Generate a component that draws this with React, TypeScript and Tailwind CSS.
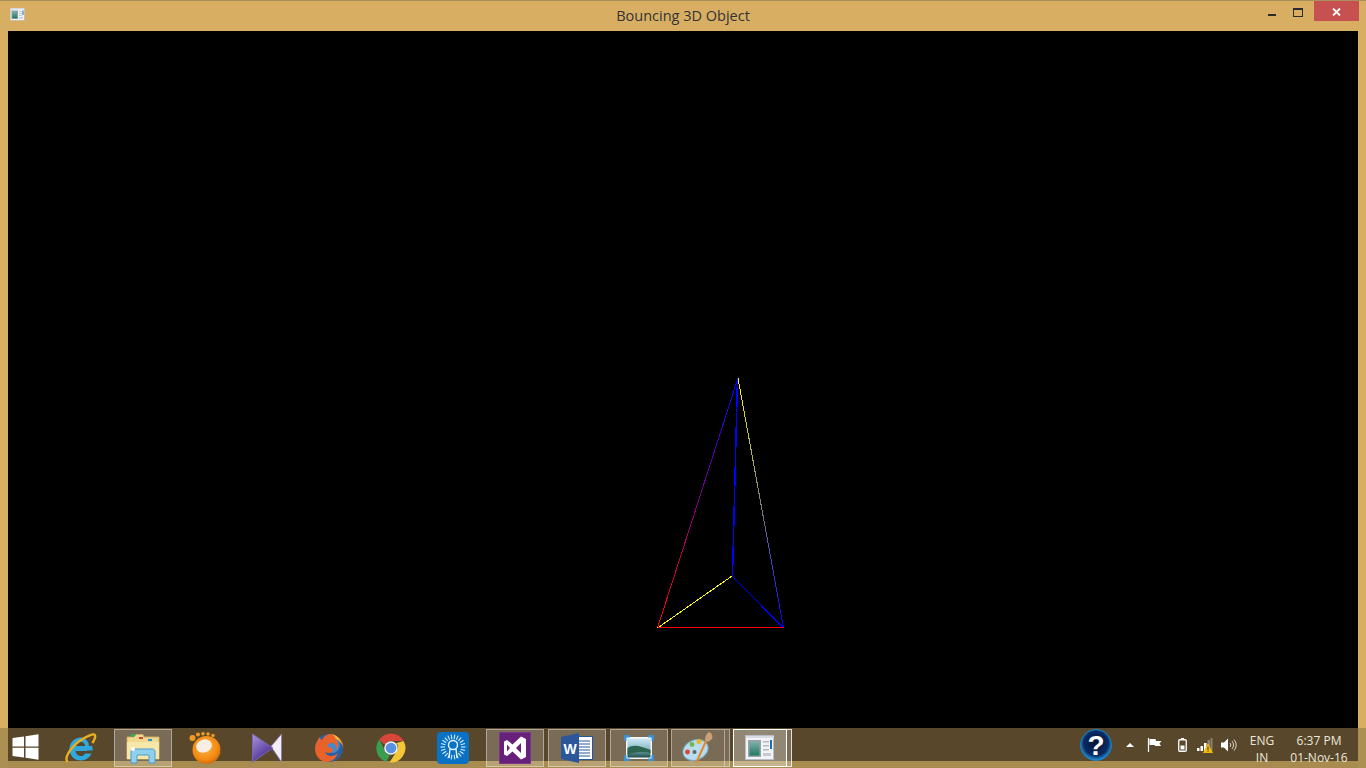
function WindowIcon({ className }: { className: string }) {
  return (
    <svg viewBox="0 0 30 26" className={className}>
      <rect x="0.5" y="0.5" width="28" height="24" fill="#f1f3f6" stroke="#b9bec6" />
      <rect x="1" y="1" width="28" height="2" fill="#d9dde3" />
      <rect x="3" y="5" width="13" height="17" fill="#9aa1a8" />
      <defs>
        <linearGradient id="thumb" x1="0" y1="0" x2="0" y2="1">
          <stop offset="0" stopColor="#7fb0ac" />
          <stop offset="1" stopColor="#1f7a63" />
        </linearGradient>
      </defs>
      <rect x="4.5" y="6.5" width="10" height="14" fill="url(#thumb)" />
      <rect x="18" y="6" width="6" height="1.5" fill="#b5bac0" />
      <rect x="18" y="10" width="6" height="1.5" fill="#b5bac0" />
      <rect x="18" y="14" width="6" height="1.5" fill="#b5bac0" />
      <rect x="18" y="18" width="8" height="3" fill="#c7cbd0" />
      <rect x="25" y="5" width="2" height="9" fill="#1c6fb5" />
    </svg>
  );
}

function StartIcon() {
  return (
    <svg viewBox="0 0 26 26" className="w-[27px] h-[26px]">
      <path d="M0 4 L11.5 2.4 V12.4 H0 Z M13 2.2 L26 0.2 V12.4 H13 Z M0 13.8 H11.5 V23.6 L0 22 Z M13 13.8 H26 V25.8 L13 23.8 Z" fill="#fff" />
    </svg>
  );
}

function IeIcon() {
  return (
    <svg viewBox="0 0 32 32" className="w-8 h-8">
      <path d="M7.500 15 H24 C24.500 9.500 20 5 15 5.500 C9 6 4.500 11 4.500 17 C4.500 24 10 29 16.500 28.500 C21 28 24.500 26 26.500 21.500 H20 C19 23.500 17.500 24 16 24 C13 24 10.500 21.500 10.500 18.500 H27.500 C28 16.500 27.500 15 27 14 H10.500 C11 11.500 13 10 15.500 10 C18 10 19.500 11.500 20 14" fill="#2fa8e0" />
      <path d="M10.500 14 C11 11.500 13 10 15.500 10 C18 10 19.500 11.500 20 14 Z" fill="#58472b" />
      <path d="M10.500 18.500 H22" stroke="#2fa8e0" strokeWidth="1" />
      <path d="M2.500 30 C-1.500 25 9 9 26 2.800 C31 1 31.500 4.500 27.500 11" fill="none" stroke="#e8b021" strokeWidth="2.400" />
    </svg>
  );
}

function FolderIcon() {
  return (
    <svg viewBox="0 0 34 32" className="w-[34px] h-8">
      <path d="M1 5 H8 L10 2.500 H17 L18 5 H33 V27 H1 Z" fill="#f0d98e" stroke="#c9ad67" />
      <rect x="5" y="2" width="4" height="2.500" fill="#2fb24a" />
      <rect x="13" y="5" width="4" height="2" fill="#c9433a" />
      <rect x="22" y="7" width="4" height="2" fill="#2b8fd0" />
      <path d="M1 10 H33 V27 H1 Z" fill="#f6e6a8" />
      <path d="M5 31 V20 C5 18 6 17 8 17 H26 C28 17 29 18 29 20 V31 H23 V23 H11 V31 Z" fill="#8fd0ec" stroke="#4f9ccc" />
      <circle cx="7" cy="17" r="2" fill="#fff" />
    </svg>
  );
}

function GomIcon() {
  return (
    <svg viewBox="0 0 32 32" className="w-8 h-8">
      <defs>
        <radialGradient id="gom" cx="0.450" cy="0.400" r="0.650">
          <stop offset="0" stopColor="#ffb347" />
          <stop offset="0.700" stopColor="#f28a12" />
          <stop offset="1" stopColor="#c9600a" />
        </radialGradient>
      </defs>
      <circle cx="3.500" cy="6" r="3" fill="#f39a1e" />
      <circle cx="9" cy="2.500" r="2" fill="#f39a1e" />
      <circle cx="14" cy="1.800" r="1.800" fill="#f39a1e" />
      <circle cx="19" cy="2" r="1.800" fill="#f39a1e" />
      <circle cx="24" cy="3.500" r="1.700" fill="#f39a1e" />
      <circle cx="17.500" cy="18" r="14" fill="url(#gom)" />
      <ellipse cx="15" cy="14" rx="8" ry="6.500" fill="#f7efe4" transform="rotate(-20 15 14)" />
    </svg>
  );
}

function KmIcon() {
  return (
    <svg viewBox="0 0 32 32" className="w-8 h-[31px]">
      <defs>
        <linearGradient id="km" x1="0" y1="0" x2="0.600" y2="1">
          <stop offset="0" stopColor="#a897dc" />
          <stop offset="1" stopColor="#46288f" />
        </linearGradient>
      </defs>
      <path d="M31 1 L20 14 L21.500 16 L31 30 Z" fill="#f2eff8" stroke="#8b7bb5" />
      <path d="M1 1 L22 15.500 L1 30 Z" fill="url(#km)" stroke="#7a68b0" />
    </svg>
  );
}

function FirefoxIcon() {
  return (
    <svg viewBox="0 0 32 32" className="w-8 h-8">
      <circle cx="16" cy="16" r="14" fill="#2c5ea3" />
      <circle cx="19" cy="13" r="8" fill="#4688c9" />
      <path d="M16 2 C24 2 30 8 30.500 15 C29 10 26 7 23 7 C26 11 26 15 23 17 C24 14 22 11 19 11 C15 11 14 14 15 15 C17 15 20 16 20 18 C20 21 15 22 12 20 C14 25 21 25 25 21 C23 27 18 30 14 30 C7 30 1.500 23 2 16 C2.500 11 5 7 7 5 C7 7 8 8 9 8 C10 5 13 3 16 2 Z" fill="#e8622a" />
      <path d="M23 7 C27 9 30 13 30.500 17 C30 11 26 4 19 2 C21 3.500 22 5 23 7 Z" fill="#f7b733" />
    </svg>
  );
}

function ChromeIcon() {
  return (
    <svg viewBox="0 0 30 30" className="w-[30px] h-[30px]">
      <path d="M15 0.500 A14.500 14.500 0 0 1 27.600 8 H15 A7 7 0 0 0 8.500 12 L3.300 6.500 A14.500 14.500 0 0 1 15 0.500 Z" fill="#d8453a" />
      <path d="M3.300 6.500 L8.800 17.500 A7 7 0 0 0 14 22 L10 29 A14.500 14.500 0 0 1 3.300 6.500 Z" fill="#3a9d50" />
      <path d="M27.600 8 A14.500 14.500 0 0 1 13.500 29.400 L20.500 18.500 A7 7 0 0 0 20.500 10 Z" fill="#f3c736" />
      <circle cx="15" cy="15" r="6.800" fill="#f3f3f3" />
      <circle cx="15" cy="15" r="5.300" fill="#5a90e0" />
    </svg>
  );
}

// rays round the keyhole, computed once
const rays = Array.from({ length: 22 }, (_, i) => {
  const a = (i / 22) * Math.PI * 2;
  return {
    x1: 16 + Math.cos(a) * 8,
    y1: 15 + Math.sin(a) * 8,
    x2: 16 + Math.cos(a) * 12.5,
    y2: 15 + Math.sin(a) * 12.5,
  };
});

function RaysIcon() {
  return (
    <svg viewBox="0 0 32 32" className="w-8 h-8">
      <rect width="32" height="32" rx="4" fill="#0a72c4" />
      {rays.map((r, i) => (
        <line key={i} {...r} stroke="#d6ecfa" strokeWidth="1.100" />
      ))}
      <circle cx="16" cy="13" r="4.500" fill="#0a72c4" stroke="#eaf5fc" strokeWidth="1.400" />
      <path d="M13 17 L12 26 M19 17 L20 26" stroke="#eaf5fc" strokeWidth="1.400" />
    </svg>
  );
}

function VsIcon() {
  return (
    <svg viewBox="0 0 32 32" className="w-8 h-8">
      <rect width="32" height="32" fill="#68217a" stroke="#8a4a9a" />
      <path d="M22 4.500 L27 7 V25 L22 27.500 L13.500 19.500 L8 24 L5 22.500 V9.500 L8 8 L13.500 12.500 Z M22 11 L17 16 L22 21 Z M8 12.500 V19.500 L11 16 Z" fill="#fff" fillRule="evenodd" />
    </svg>
  );
}

function WordIcon() {
  return (
    <svg viewBox="0 0 32 30" className="w-8 h-[30px]">
      <rect x="14" y="3.500" width="17.500" height="23" fill="#fff" stroke="#2b579a" />
      <path d="M17 8 H29 M17 11 H29 M17 14 H29 M17 17 H29 M17 20 H29 M17 23 H29" stroke="#2b579a" />
      <path d="M0 4 L18 0 V30 L0 26 Z" fill="#2b579a" />
      <text x="9" y="20.500" textAnchor="middle" fontSize="14" fontWeight="700" fill="#fff" fontFamily="'Liberation Sans', sans-serif">W</text>
    </svg>
  );
}

function PhotosIcon() {
  return (
    <svg viewBox="0 0 30 26" className="w-[30px] h-[26px]">
      <defs>
        <linearGradient id="sky" x1="0" y1="0" x2="0" y2="1">
          <stop offset="0" stopColor="#cfe8f4" />
          <stop offset="0.500" stopColor="#8fc0cc" />
          <stop offset="1" stopColor="#1d4d4a" />
        </linearGradient>
      </defs>
      <rect x="2" y="2" width="26" height="22" fill="#f4f6f8" />
      <rect x="3.500" y="3.500" width="23" height="19" fill="url(#sky)" />
      <path d="M3.500 13 C10 9 16 11 26.500 15 V18 C18 16 10 17 3.500 20 Z" fill="#2d6650" />
      <path d="M0 0 H6 V2.500 H2.500 V6 H0 Z M24 0 H30 V6 H27.500 V2.500 H24 Z M0 20 H2.500 V23.500 H6 V26 H0 Z M27.500 20 H30 V26 H24 V23.500 H27.500 Z" fill="#3d8fd0" />
    </svg>
  );
}

function PaintIcon() {
  return (
    <svg viewBox="0 0 32 32" className="w-8 h-8">
      <ellipse cx="13.500" cy="18" rx="13" ry="10" fill="#b9ddec" stroke="#6fa9c4" transform="rotate(-22 13.500 18)" />
      <circle cx="5.500" cy="20" r="2.400" fill="#d8453a" />
      <circle cx="10" cy="12.500" r="2.400" fill="#74b84a" />
      <circle cx="17" cy="9.500" r="2.500" fill="#f0b429" />
      <circle cx="12.500" cy="20" r="2" fill="#5c6670" />
      <path d="M14.500 30 L24.500 8" stroke="#e8862a" strokeWidth="2" />
      <path d="M23 8 C23 4 25 1 27 0 C30 1 31 4 30 7 L26 10 Z" fill="#c9a077" />
    </svg>
  );
}

function HelpIcon() {
  return (
    <svg viewBox="0 0 32 32" className="w-8 h-8">
      <defs>
        <radialGradient id="help" cx="0.500" cy="0.450" r="0.520">
          <stop offset="0" stopColor="#05122f" />
          <stop offset="0.750" stopColor="#0a2a63" />
          <stop offset="1" stopColor="#1f86c9" />
        </radialGradient>
      </defs>
      <circle cx="16" cy="16" r="15.500" fill="url(#help)" stroke="#1c7fc0" />
      <text x="16" y="26" textAnchor="middle" fontSize="28" fontWeight="700" fill="#fff" fontFamily="'Liberation Sans', sans-serif">?</text>
    </svg>
  );
}

function FlagIcon() {
  return (
    <svg viewBox="0 0 15 14" className="w-[15px] h-[14px]">
      <path d="M1.500 0 V14" stroke="#fff" strokeWidth="1.200" />
      <path d="M2.500 1 H8.500 L9 3 H14.500 L12.500 5.500 L14 8 H8 L7.500 7 H2.500 Z" fill="#fff" />
    </svg>
  );
}

function BatteryIcon() {
  return (
    <svg viewBox="0 0 9 14" className="w-[9px] h-[14px]">
      <rect x="3" y="0" width="3" height="1.500" fill="#fff" />
      <rect x="0.750" y="1.750" width="7.500" height="11.500" rx="1" fill="none" stroke="#fff" strokeWidth="1.300" />
      <rect x="2.500" y="7.500" width="4" height="4" fill="#fff" />
    </svg>
  );
}

function SignalIcon() {
  return (
    <svg viewBox="0 0 16 15" className="w-4 h-[15px]">
      <rect x="0" y="10" width="2.500" height="3" fill="#fff" />
      <rect x="3.500" y="8" width="2.500" height="5" fill="#fff" />
      <rect x="7" y="5" width="2.500" height="8" fill="#fff" />
      <rect x="10.500" y="2" width="2.500" height="11" fill="#8a8272" />
      <rect x="13.500" y="0" width="2" height="13" fill="#8a8272" />
      <path d="M11 5 L16 15 H6 Z" fill="#f2b90f" />
      <rect x="10.500" y="8.500" width="1" height="3.500" fill="#4a3a10" />
      <rect x="10.500" y="12.800" width="1" height="1" fill="#4a3a10" />
    </svg>
  );
}

function SpeakerIcon() {
  return (
    <svg viewBox="0 0 16 14" className="w-4 h-[14px]">
      <path d="M0 4.500 H3 L7 0.500 V13.500 L3 9.500 H0 Z" fill="#fff" />
      <path d="M9 5 A3 3 0 0 1 9 9 M11 3 A6 6 0 0 1 11 11 M13 1.500 A8 8 0 0 1 13 12.500" fill="none" stroke="#d8d3c5" />
    </svg>
  );
}

function Pinned({ children, active }: { children: React.ReactNode; active?: boolean }) {
  return (
    <div
      className={`w-[58px] h-[38px] mt-px mx-[2px] flex items-center justify-center shrink-0 ${
        active ? "border border-white/40 bg-white/20" : ""
      }`}
    >
      {children}
    </div>
  );
}

function Wireframe() {
  return (
    <svg viewBox="8 31 1350 697" className="w-full h-full block" shapeRendering="crispEdges">
      <defs>
        <linearGradient id="edgeLeft" gradientUnits="userSpaceOnUse" x1="738" y1="378" x2="658" y2="627">
          <stop offset="0" stopColor="#0000ff" />
          <stop offset="1" stopColor="#ff0000" />
        </linearGradient>
        <linearGradient id="edgeRight" gradientUnits="userSpaceOnUse" x1="738" y1="378" x2="783" y2="627">
          <stop offset="0" stopColor="#ffff00" />
          <stop offset="1" stopColor="#0000ff" />
        </linearGradient>
      </defs>
      <line x1="738" y1="378" x2="657.500" y2="628" stroke="url(#edgeLeft)" />
      <line x1="738" y1="378" x2="783.500" y2="628" stroke="url(#edgeRight)" />
      <line x1="737.500" y1="378" x2="732.500" y2="576" stroke="#0000ff" strokeWidth="1.500" />
      <line x1="732" y1="576" x2="657.500" y2="628" stroke="#ffff00" />
      <line x1="732" y1="576" x2="783.500" y2="628" stroke="#0000ff" />
      <line x1="657.500" y1="627.500" x2="783.500" y2="627.500" stroke="#ff0000" />
    </svg>
  );
}

export default function App() {
  return (
    <div
      className="w-[1366px] h-[768px] flex flex-col overflow-hidden bg-[#d8ae63]"
      style={{ fontFamily: "'Open Sans', 'Noto Sans', sans-serif" }}
    >
      {/* title bar */}
      <div className="h-[31px] shrink-0 flex border-t border-[#a98f5a]">
        <div className="w-[107px] shrink-0 pl-[10px] pt-[7px]">
          <WindowIcon className="w-[15px] h-[13px]" />
        </div>
        <div className="flex-1 text-center text-[14.5px] leading-[29px] text-[#333]">Bouncing 3D Object</div>
        <div className="w-[107px] shrink-0 flex items-start">
          <div className="w-[26px] h-[20px] flex items-center justify-center">
            <div className="w-2 h-[2px] mt-[7px] bg-[#2b2b2b]" />
          </div>
          <div className="w-[26px] h-[20px] flex items-center justify-center">
            <div className="w-[10px] h-[9px] border border-t-2 border-[#2b2b2b] mt-[2px]" />
          </div>
          <div className="w-[45px] h-[20px] ml-[3px] bg-[#c75050] flex items-center justify-center">
            <svg viewBox="0 0 9 8" className="w-[9px] h-2 mt-[1px]">
              <path d="M1 0.500 L8 7.500 M8 0.500 L1 7.500" stroke="#fff" strokeWidth="1.800" />
            </svg>
          </div>
        </div>
      </div>

      {/* client area */}
      <div className="flex-1 min-h-0 px-2">
        <div className="h-full bg-black">
          <Wireframe />
        </div>
      </div>

      {/* taskbar */}
      <div className="h-10 shrink-0 px-2 bg-[#ac9052]">
        <div className="h-full flex bg-[linear-gradient(to_bottom,#58472b_33px,#a88b4f_33px)] text-[12px] leading-[17px] text-[#ece8dc]">
          <div className="w-[42px] shrink-0 flex items-center pl-[4px] pb-[2px]">
            <StartIcon />
          </div>
          <div className="flex">
            <Pinned><IeIcon /></Pinned>
            <Pinned active><FolderIcon /></Pinned>
            <Pinned><GomIcon /></Pinned>
            <Pinned><KmIcon /></Pinned>
            <Pinned><FirefoxIcon /></Pinned>
            <Pinned><ChromeIcon /></Pinned>
            <Pinned><RaysIcon /></Pinned>
            <Pinned active><VsIcon /></Pinned>
            <Pinned active><WordIcon /></Pinned>
            <Pinned active><PhotosIcon /></Pinned>
            <div className="w-[54px] h-[38px] mt-px ml-px mr-[2px] border border-white/40 bg-white/20 flex items-center justify-center shrink-0">
              <PaintIcon />
            </div>
            <div className="w-[5px] h-[38px] mt-px -ml-[2px] border border-l-0 border-white/40 bg-white/20" />
            <div className="w-[54px] h-[38px] mt-px ml-[3px] border border-white bg-white/35 flex items-center justify-center shrink-0">
              <WindowIcon className="w-[30px] h-[26px]" />
            </div>
            <div className="w-[5px] h-[38px] mt-px border border-l-0 border-white/80 bg-white/20" />
          </div>

          <div className="ml-auto flex">
            <div className="flex items-center pb-[7px]">
              <HelpIcon />
            </div>
            <div className="flex items-center pb-[6px] pl-[14px]">
              <div className="w-0 h-0 border-x-[4px] border-x-transparent border-b-[4px] border-b-white" />
              <div className="ml-[13px]"><FlagIcon /></div>
              <div className="ml-[16px]"><BatteryIcon /></div>
              <div className="ml-[10px]"><SignalIcon /></div>
              <div className="ml-[8px]"><SpeakerIcon /></div>
            </div>
            <div className="w-10 ml-[5px] text-center pt-[4px]">
              <div>ENG</div>
              <div>IN</div>
            </div>
            <div className="w-[72px] mr-[3px] ml-px text-center pt-[4px]">
              <div>6:37 PM</div>
              <div>01-Nov-16</div>
            </div>
          </div>
        </div>
      </div>
    </div>
  );
}
